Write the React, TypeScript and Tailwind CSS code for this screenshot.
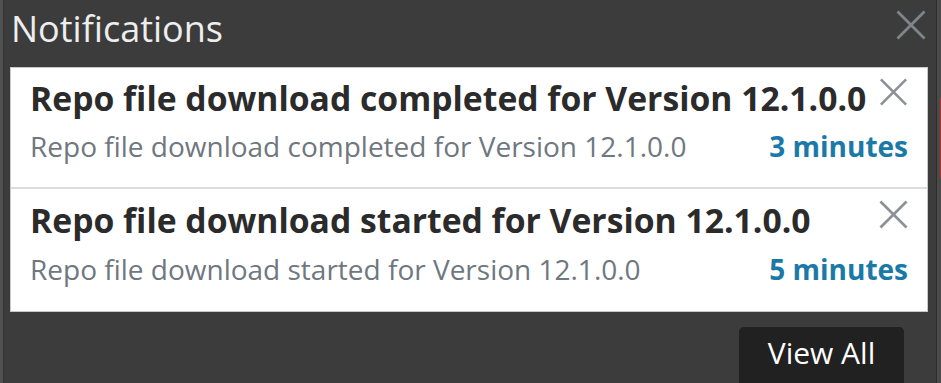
import React from "react";

function CloseIcon({ className }: { className: string }) {
  return (
    <svg viewBox="0 0 30 30" className={className} fill="none" stroke="currentColor" strokeWidth="2.8">
      <path d="M1.5 1.5 L28.5 28.5 M28.5 1.5 L1.5 28.5" />
    </svg>
  );
}

const items = [
  { title: "Repo file download completed for Version 12.1.0.0", when: "3 minutes" },
  { title: "Repo file download started for Version 12.1.0.0", when: "5 minutes" },
];

export default function App() {
  return (
    <div className="flex w-[941px] h-[383px] overflow-hidden bg-[#3c3c3c] font-['Open_Sans',sans-serif]">
      {/* left edge */}
      <div className="w-[3px] bg-[#515151]" />
      <div className="w-[1px] bg-[#333333]" />

      <div className="flex flex-col flex-1 pl-[6px] pr-[8px]">
        <div className="flex items-start justify-between h-[67px] shrink-0">
          <h1 className="pl-[1px] pt-[5px] text-[36px] leading-[48px] text-[#eeeeee]">Notifications</h1>
          <CloseIcon className="mt-[10px] mr-[2px] w-[30px] h-[30px] text-[#80858b]" />
        </div>

        <div className="bg-white border border-[#c8c8c8] shrink-0">
          <div className="h-[121px] pl-[19px] pr-[19px] pt-[7px] border-b-2 border-[#dcdcdc]">
            <div className="flex items-start justify-between">
              <p className="text-[33.7px] leading-[46px] font-bold text-[#2b2b2b] whitespace-nowrap">{items[0].title}</p>
              <CloseIcon className="mt-[3px] w-[29px] h-[28px] text-[#8d9197]" />
            </div>
            <div className="flex items-baseline justify-between mt-[6px]">
              <p className="text-[28px] leading-[38px] text-[#6f7780] whitespace-nowrap">{items[0].title}</p>
              <p className="text-[28px] leading-[38px] font-bold text-[#1b79a8]">{items[0].when}</p>
            </div>
          </div>
          <div className="h-[122px] pl-[19px] pr-[19px] pt-[8px]">
            <div className="flex items-start justify-between">
              <p className="text-[33.7px] leading-[46px] font-bold text-[#2b2b2b] whitespace-nowrap">{items[1].title}</p>
              <CloseIcon className="mt-[3px] w-[29px] h-[29px] text-[#8d9197]" />
            </div>
            <div className="flex items-baseline justify-between mt-[7px]">
              <p className="text-[28px] leading-[38px] text-[#6f7780] whitespace-nowrap">{items[1].title}</p>
              <p className="text-[28px] leading-[38px] font-bold text-[#1b79a8]">{items[1].when}</p>
            </div>
          </div>
        </div>

        <div className="flex justify-end pt-[15px] pr-[24px] shrink-0">
          <button className="w-[165px] h-[70px] rounded-[5px] bg-[#212121] text-[30px] leading-[40px] text-white pt-[6px] flex justify-center items-start">View All</button>
        </div>
      </div>

      {/* right edge */}
      <div className="w-[1px] bg-[#2e2e2e]" />
      <div className="w-[3px] bg-[#4a4a4a]" />
      <div className="flex flex-col w-[1px] bg-[#4a4a4a]">
        <div className="h-[98px]" />
        <div className="h-[80px] bg-[#b03030]" />
      </div>
    </div>
  );
}
